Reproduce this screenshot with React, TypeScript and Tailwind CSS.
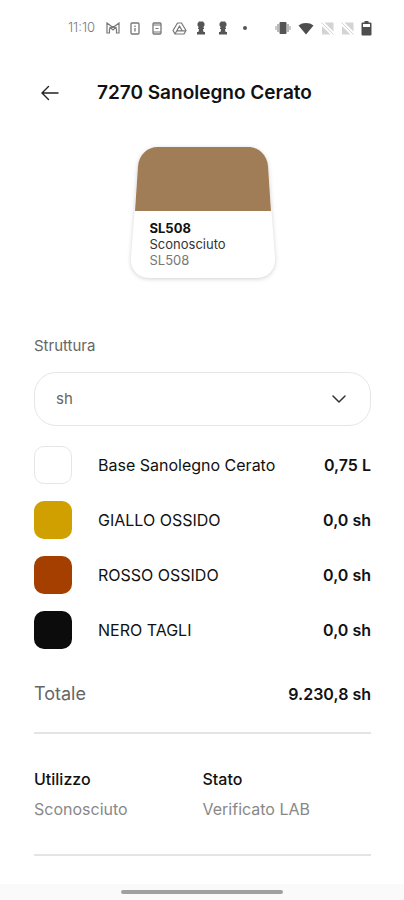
import type { ReactNode } from "react";
import { ChevronDown } from "lucide-react";

interface Ingredient {
  name: string;
  amount: string;
  swatch: string;
}

const ingredients: Ingredient[] = [
  { name: "Base Sanolegno Cerato", amount: "0,75 L", swatch: "border border-[#e6e6e6] bg-white" },
  { name: "GIALLO OSSIDO", amount: "0,0 sh", swatch: "bg-[#d0a000]" },
  { name: "ROSSO OSSIDO", amount: "0,0 sh", swatch: "bg-[#a43f00]" },
  { name: "NERO TAGLI", amount: "0,0 sh", swatch: "bg-[#0c0c0c]" },
];

const details = [
  { label: "Utilizzo", value: "Sconosciuto" },
  { label: "Stato", value: "Verificato LAB" },
];

function BackArrow() {
  return (
    <svg width="18" height="16" viewBox="0 0 18 16" fill="none" stroke="#222" strokeWidth="1.4" strokeLinecap="round" strokeLinejoin="round">
      <path d="M17 8H1.500M7.500 1.500 1 8l6.500 6.500" />
    </svg>
  );
}

function MailIcon() {
  return (
    <svg width="14" height="12" viewBox="0 0 14 12" fill="none" stroke="#777" strokeWidth="1.2">
      <path d="M1 1v10h2.500V7L7 4.500 10.500 7v4H13V1l-6 4.500z" />
      <path d="M3.500 5 7 8l3.500-3" />
    </svg>
  );
}

function PhoneIcon({ dashed }: { dashed?: boolean }) {
  return (
    <svg width="10" height="13" viewBox="0 0 10 13" fill="none" stroke="#777">
      <rect x="1" y="1" width="8" height="11" rx="1" strokeWidth="1.3" />
      {dashed ? <path d="M1 3h8M1 10h8M3.500 6.500h3" /> : <path d="M5 3.500V5M5 6v3.500" strokeWidth="1.3" />}
    </svg>
  );
}

function DriveIcon() {
  return (
    <svg width="15" height="13" viewBox="0 0 15 13" fill="none" stroke="#777" strokeWidth="1.2" strokeLinejoin="round">
      <path d="M5.500 1h4L14 8.500 12 12H3L1 8.500z" />
      <path d="M7.500 4 4.800 8.800h5.400zM3 12l1.800-3.200M10.200 8.800H14" />
    </svg>
  );
}

function KeyholeIcon() {
  return (
    <svg width="10" height="14" viewBox="0 0 10 14" fill="#555">
      <path d="M3 .5h4L8.500 2.500v2L7 6.500h1V8H7l.5 3H9v2.500H1V11h1.500L3 8H2V6.500h1L1.500 4.500v-2z" />
    </svg>
  );
}

function VibrateIcon() {
  return (
    <svg width="16" height="14" viewBox="0 0 16 14" fill="#555">
      <rect x="4.500" y="1" width="7" height="12" rx="1" />
      <path d="M3 3v8M13 3v8" stroke="#777" />
      <path d="M1 5v4M15 5v4" stroke="#999" />
    </svg>
  );
}

function WifiIcon() {
  return (
    <svg width="16" height="13" viewBox="0 0 16 13" fill="#4d4d4d">
      <path d="M8 12.500.5 3.500C4.500.2 11.500.2 15.500 3.500z" />
    </svg>
  );
}

function NoSignalIcon() {
  return (
    <svg width="13" height="13" viewBox="0 0 13 13" fill="#d4d4d4">
      <path d="M3.500.5h9v9zM1 4l8.500 8.500H1z" />
      <path d="m.5.500 12 12" stroke="#d4d4d4" />
    </svg>
  );
}

function BatteryIcon() {
  return (
    <svg width="11" height="15" viewBox="0 0 11 15" fill="#4d4d4d">
      <path d="M3.500 0h4v1.500H9.500a1 1 0 0 1 1 1v11a1 1 0 0 1-1 1h-8a1 1 0 0 1-1-1v-11a1 1 0 0 1 1-1h2zM2 3v3h7V3z" />
    </svg>
  );
}

function StatusSlot({ children }: { children: ReactNode }) {
  return <span className="flex w-[22px] justify-center">{children}</span>;
}

function StatusBar() {
  return (
    <div className="flex h-14 items-center justify-between pr-8 pl-[68px]">
      <div className="flex items-center">
        <span className="w-[34px] text-[13px] font-light text-[#777777]">11:10</span>
        <StatusSlot><MailIcon /></StatusSlot>
        <StatusSlot><PhoneIcon /></StatusSlot>
        <StatusSlot><PhoneIcon dashed /></StatusSlot>
        <StatusSlot><DriveIcon /></StatusSlot>
        <StatusSlot><KeyholeIcon /></StatusSlot>
        <StatusSlot><KeyholeIcon /></StatusSlot>
        <StatusSlot><span className="size-1 rounded-full bg-[#555555]" /></StatusSlot>
      </div>
      <div className="flex items-center gap-[7px]">
        <VibrateIcon />
        <WifiIcon />
        <NoSignalIcon />
        <NoSignalIcon />
        <BatteryIcon />
      </div>
    </div>
  );
}

function ColorCard() {
  return (
    <div className="relative mx-auto mt-[17px] h-[132px] w-[146px]">
      <svg className="absolute inset-0 overflow-visible drop-shadow-[0_1px_2px_rgba(0,0,0,0.18)]" width="146" height="132" viewBox="0 0 146 132">
        <path d="M28 1h90c11 0 19 8 20 19l7 90c1 13-7 21-19 21H20C8 131 0 123 1 110L8 20C9 9 17 1 28 1z" fill="#fff" />
        <path d="M28 0h90c11 0 19 8 20 19l3 45H5l3-45C9 8 17 0 28 0z" fill="#a07d56" />
      </svg>
      <div className="relative pt-[73px] pl-5 text-[13px] leading-4">
        <p className="font-bold text-[#111111]">SL508</p>
        <p className="text-[#333333]">Sconosciuto</p>
        <p className="text-[#777777]">SL508</p>
      </div>
    </div>
  );
}

export default function App() {
  return (
    <div className="flex min-h-screen flex-col bg-white font-['Inter',sans-serif] text-[#111111]">
      <StatusBar />

      <header className="flex h-[74px] items-center gap-[38px] px-[41px]">
        <button type="button" aria-label="Indietro">
          <BackArrow />
        </button>
        <h1 className="text-[19px] font-semibold">7270 Sanolegno Cerato</h1>
      </header>

      <main className="pr-[33px] pl-[34px]">
        <ColorCard />

        <label htmlFor="struttura" className="mt-[55px] block text-[15px] leading-6 text-[#666666]">
          Struttura
        </label>
        <div className="relative mt-[14px]">
          <select
            id="struttura"
            className="h-[54px] w-full appearance-none rounded-[22px] border border-[#e6e6e6] bg-white px-[21px] text-[15px] text-[#666666]"
          >
            <option>sh</option>
          </select>
          <ChevronDown size={24} strokeWidth={1.5} className="pointer-events-none absolute top-[15px] right-5 text-[#333333]" />
        </div>

        <ul className="mt-5 flex flex-col gap-[17px]">
          {ingredients.map((item) => (
            <li key={item.name} className="flex h-[38px] items-center">
              <span className={`size-[38px] rounded-[10px] ${item.swatch}`} />
              <span className="ml-[26px] flex-1 text-base">{item.name}</span>
              <span className="text-base font-semibold">{item.amount}</span>
            </li>
          ))}
        </ul>

        <div className="mt-[31px] flex h-7 items-center justify-between">
          <span className="text-lg text-[#666666]">Totale</span>
          <span className="text-base font-semibold">9.230,8 sh</span>
        </div>

        <hr className="mt-6 border-t-2 border-[#e4e4e4]" />

        <dl className="my-[33px] grid grid-cols-2">
          {details.map((detail) => (
            <div key={detail.label} className="leading-6">
              <dt className="text-base font-medium">{detail.label}</dt>
              <dd className="mt-[6px] text-base text-[#888888]">{detail.value}</dd>
            </div>
          ))}
        </dl>

        <hr className="border-t-2 border-[#e4e4e4]" />
      </main>

      <div className="mt-auto flex h-4 items-center justify-center bg-[#fafafa]">
        <span className="h-1 w-2/5 rounded-full bg-[#a0a0a0]" />
      </div>
    </div>
  );
}
